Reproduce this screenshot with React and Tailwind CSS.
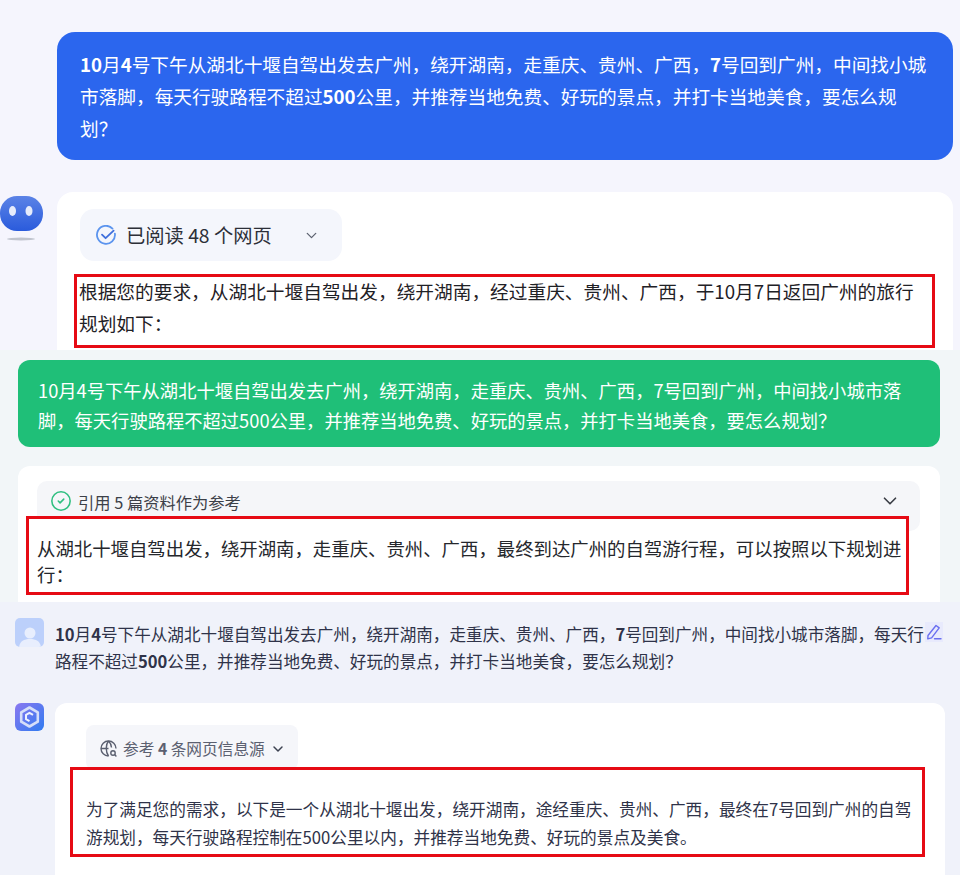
import React from "react";
import { ChevronDown, CircleCheck } from "lucide-react";

const font = { fontFamily: '"Noto Sans CJK SC", "Liberation Sans", sans-serif' };

function Lines({ lines, className }) {
  return (
    <div className={className}>
      {lines.map((l, i) => (
        <div key={i} className="whitespace-nowrap">{l}</div>
      ))}
    </div>
  );
}

function Robot() {
  return (
    <svg width="44" height="48" viewBox="0 0 44 48" className="shrink-0">
      <defs>
        <linearGradient id="rb" x1="0" y1="0" x2="0" y2="1">
          <stop offset="0" stopColor="#5b83e6" />
          <stop offset="1" stopColor="#2a5bdc" />
        </linearGradient>
      </defs>
      <rect x="0" y="0" width="43" height="35" rx="17" fill="url(#rb)" />
      <ellipse cx="12.5" cy="15" rx="3.5" ry="5" fill="#e6ecfb" />
      <ellipse cx="29" cy="15" rx="3.5" ry="5" fill="#e6ecfb" />
      <ellipse cx="21" cy="43" rx="14" ry="1.5" fill="#c0c4ce" />
    </svg>
  );
}

function ReadCheck() {
  return (
    <svg width="20" height="20" viewBox="0 0 20 20" fill="none" className="shrink-0">
      <path d="M16.5 3.6A9 9 0 1 0 18.9 8.6" stroke="#5b94ee" strokeWidth="1.8" strokeLinecap="round" />
      <path d="M6 9.6l3.6 3.6 8-7.6" stroke="#3f6fdc" strokeWidth="1.8" strokeLinecap="round" strokeLinejoin="round" />
    </svg>
  );
}

function GlobeSearch() {
  return (
    <svg width="18" height="18" viewBox="0 0 18 18" fill="none" stroke="#5b6070" strokeWidth="1.4" className="shrink-0">
      <path d="M8.5 16A7.5 7.5 0 1 1 16 8.5" />
      <path d="M1 8.5h7.5M8.5 1c-3 3.5-3 11 0 15M8.5 1c2 2 3 4.5 3 6.5" />
      <circle cx="13" cy="13" r="2.2" />
      <path d="M14.6 14.6l1.8 1.8" />
    </svg>
  );
}

function Pencil() {
  return (
    <svg width="18" height="18" viewBox="0 0 18 18" fill="none" stroke="#6a6ff0" strokeWidth="1.4" strokeLinejoin="round" strokeLinecap="round">
      <path d="M3 12.5L11 2.5l3.2 2.4-7.6 10-3.8 1z" />
      <path d="M9.5 15.8h6.5" />
    </svg>
  );
}

function HexLogo() {
  return (
    <svg width="29" height="28" viewBox="0 0 29 28" className="shrink-0">
      <defs>
        <linearGradient id="hx" x1="0" y1="0" x2="1" y2="1">
          <stop offset="0" stopColor="#8b78f0" />
          <stop offset="1" stopColor="#2f7bf0" />
        </linearGradient>
      </defs>
      <rect width="29" height="28" rx="6" fill="url(#hx)" />
      <path d="M14.5 4.5l8.3 4.8v9.4l-8.3 4.8-8.3-4.8V9.300z" fill="none" stroke="#d5def9" strokeWidth="2.6" strokeLinejoin="round" />
      <path d="M18 11.800l-3.500-2-3.500 2v4.400l3.500 2" fill="none" stroke="#eef2fe" strokeWidth="2" strokeLinejoin="round" />
    </svg>
  );
}

const B = ({ children }) => <span className="font-bold">{children}</span>;

export default function App() {
  return (
    <div style={font} className="w-[960px] h-[880px] bg-white overflow-hidden">
      {/* Section 1 */}
      <section className="h-[350px] bg-[#f5f5fd] pt-8 pl-[57px] pr-[7px]">
        <div className="h-[128px] rounded-[18px] bg-[#2b66ee] pt-[16px] pl-[23px] text-white">
          <Lines
            className="text-[18.66px] leading-[32px]"
            lines={[
              <><B>10</B>月<B>4</B>号下午从湖北十堰自驾出发去广州，绕开湖南，走重庆、贵州、广西，<B>7</B>号回到广州，中间找小城</>,
              <>市落脚，每天行驶路程不超过<B>500</B>公里，并推荐当地免费、好玩的景点，并打卡当地美食，要怎么规</>,
              "划？",
            ]}
          />
        </div>
        <div className="relative mt-8 h-[158px] rounded-t-[16px] bg-white pt-[17px] pl-[17px]">
          <div className="absolute -left-[57px] top-[4px]"><Robot /></div>
          <div className="ml-[6px] flex h-[52px] w-[262px] items-center rounded-[14px] bg-[#f4f6fc] pl-[16px] pr-[22px] text-[#2c2f38]">
            <ReadCheck />
            <span className="ml-[10px] text-[19.3px]">已阅读 48 个网页</span>
            <ChevronDown size={17} strokeWidth={1.8} className="ml-auto text-[#5c6270]" />
          </div>
          <div className="mt-[13px] h-[74px] w-[861px] border-[3px] border-[#e60a14] pl-[2px] text-[#1f2126]">
            <Lines
              className="-mt-[2px] text-[18.7px] leading-[32px]"
              lines={[
                "根据您的要求，从湖北十堰自驾出发，绕开湖南，经过重庆、贵州、广西，于10月7日返回广州的旅行",
                "规划如下：",
              ]}
            />
          </div>
        </div>
      </section>

      {/* Section 2 */}
      <section className="h-[252px] bg-[#f2f6f8] pt-[10px] pl-[18px] pr-[20px]">
        <div className="h-[87px] rounded-[12px] bg-[#1fbf78] pt-[15px] pl-[20px] text-white">
          <Lines
            className="text-[18.3px] leading-[30px]"
            lines={[
              "10月4号下午从湖北十堰自驾出发去广州，绕开湖南，走重庆、贵州、广西，7号回到广州，中间找小城市落",
              "脚，每天行驶路程不超过500公里，并推荐当地免费、好玩的景点，并打卡当地美食，要怎么规划？",
            ]}
          />
        </div>
        <div className="relative mt-[19px] h-[136px] rounded-t-[12px] bg-white pt-[15px] pl-[19px] pr-[20px]">
          <div className="flex h-[50px] items-start rounded-[10px] bg-[#f5f6f9] pt-[9px] pl-[13px] pr-[19px] text-[#3c4048]">
            <CircleCheck size={22} strokeWidth={1.7} className="shrink-0 text-[#2fbf80]" />
            <span className="ml-[6px] text-[16.3px] leading-[24px]">引用 5 篇资料作为参考</span>
            <ChevronDown size={22} strokeWidth={1.8} className="ml-auto text-[#3a3d45]" />
          </div>
          <div className="absolute left-[8px] top-[50px] h-[79px] w-[883px] border-[3px] border-[#e60a14] bg-white pt-[16px] pl-[8px] text-[#25272c]">
            <Lines
              className="text-[18.4px] leading-[26px]"
              lines={[
                "从湖北十堰自驾出发，绕开湖南，走重庆、贵州、广西，最终到达广州的自驾游行程，可以按照以下规划进",
                "行：",
              ]}
            />
          </div>
        </div>
      </section>

      {/* Section 3 */}
      <section className="h-[273px] bg-[#f0f2fa] pt-[16px] pl-[15px] pr-[15px]">
        <div className="relative flex h-[85px] items-start">
          <div className="flex h-[29px] w-[29px] shrink-0 items-end justify-center overflow-hidden rounded-[5px] bg-[#bcd0fb]">
            <svg width="24" height="25" viewBox="0 0 24 25" fill="#e8eefd">
              <circle cx="12" cy="11" r="5.5" />
              <path d="M1 25c1-6 5-8 11-8s10 2 11 8z" />
            </svg>
          </div>
          <Lines
            className="ml-[11px] mt-[3px] text-[16.6px] leading-[27px] text-[#2f3349]"
            lines={[
              <><B>10</B>月<B>4</B>号下午从湖北十堰自驾出发去广州，绕开湖南，走重庆、贵州、广西，<B>7</B>号回到广州，中间找小城市落脚，每天行</>,
              <>路程不超过<B>500</B>公里，并推荐当地免费、好玩的景点，并打卡当地美食，要怎么规划？</>,
            ]}
          />
          <div className="absolute left-[910px] top-[4px] flex h-[20px] w-[18px] items-center justify-center bg-[#e8eafc]">
            <Pencil />
          </div>
        </div>
        <div className="flex items-start">
          <HexLogo />
          <div className="relative ml-[11px] h-[172px] w-[890px] rounded-t-[12px] bg-white pt-[22px] pl-[31px]">
            <div className="flex h-[45px] w-[212px] items-center rounded-[8px] bg-[#f5f6fa] pl-[14px] pt-[2px] text-[#5b6070]">
              <GlobeSearch />
              <span className="ml-[5px] text-[15.7px]">参考 <B>4</B> 条网页信息源</span>
              <ChevronDown size={16} strokeWidth={2.2} className="ml-[5px] text-[#3c4150]" />
            </div>
            <div className="absolute left-[15px] top-[64px] h-[90px] w-[855px] border-[3px] border-[#e60a14] bg-white pt-[25px] pl-[13px] text-[#2f3349]">
              <Lines
                className="text-[16.66px] leading-[28px]"
                lines={[
                  "为了满足您的需求，以下是一个从湖北十堰出发，绕开湖南，途经重庆、贵州、广西，最终在7号回到广州的自驾",
                  "游规划，每天行驶路程控制在500公里以内，并推荐当地免费、好玩的景点及美食。",
                ]}
              />
            </div>
          </div>
        </div>
      </section>
    </div>
  );
}
